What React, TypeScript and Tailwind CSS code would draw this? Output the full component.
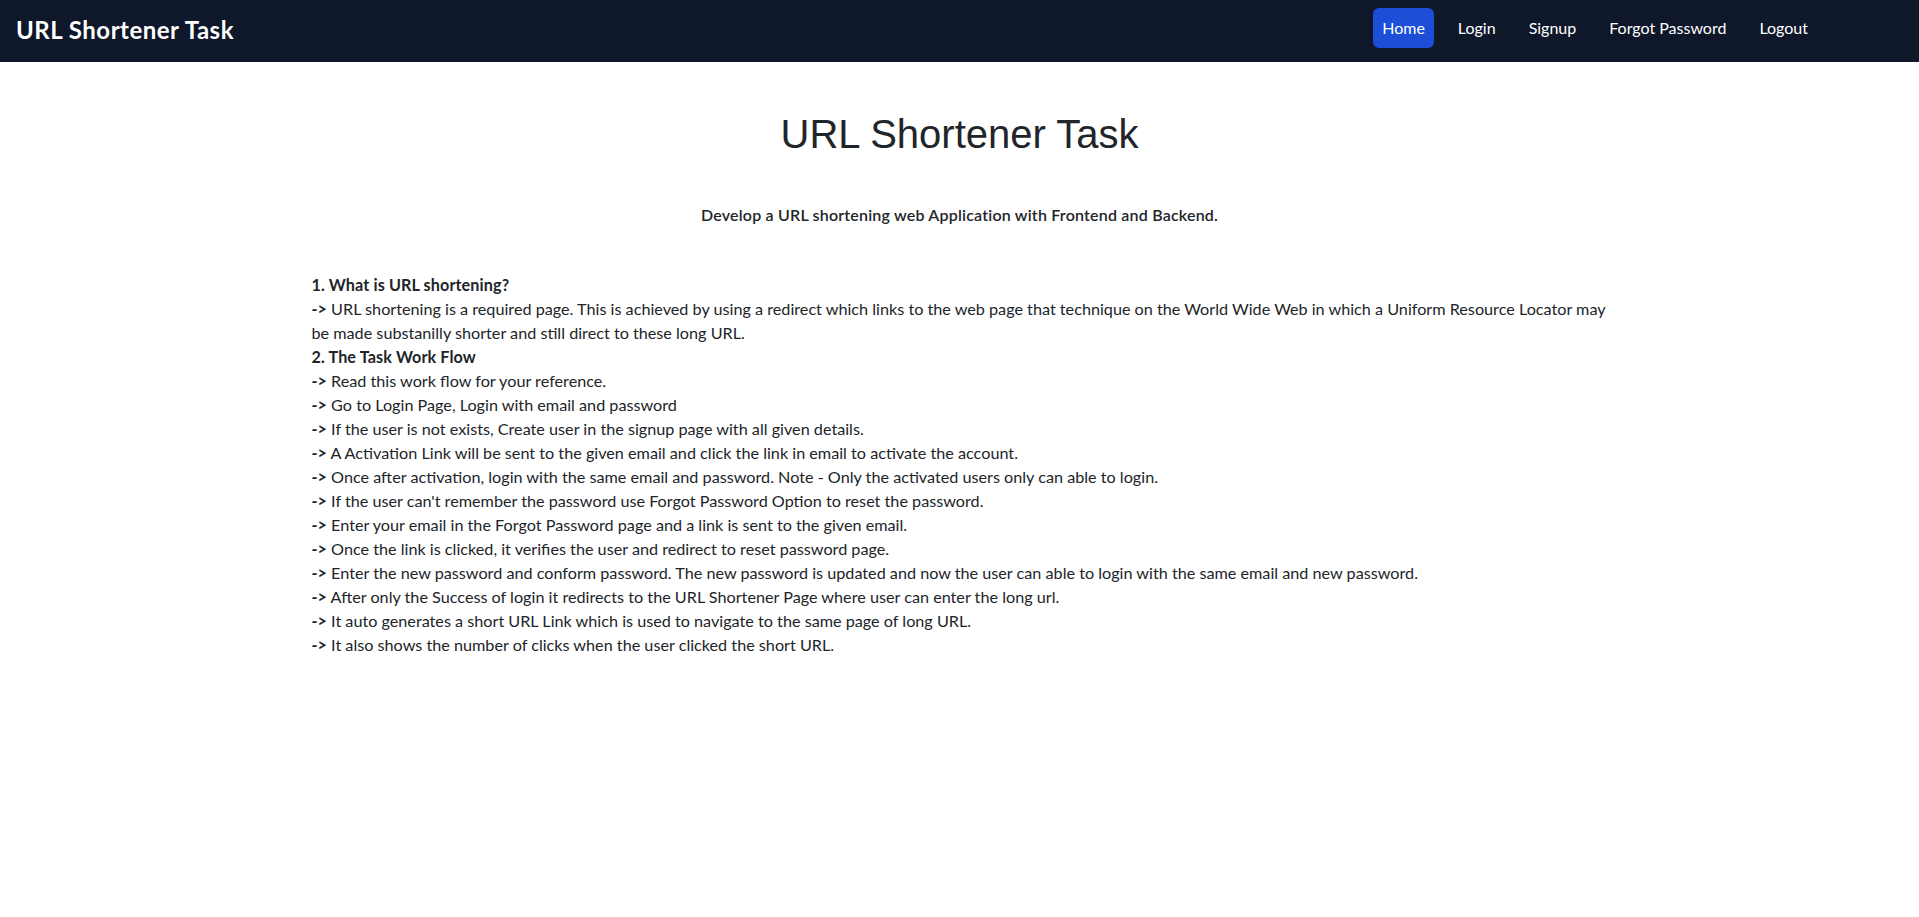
const navLinks = ["Home", "Login", "Signup", "Forgot Password", "Logout"];

const steps = [
  "Read this work flow for your reference.",
  "Go to Login Page, Login with email and password",
  "If the user is not exists, Create user in the signup page with all given details.",
  "A Activation Link will be sent to the given email and click the link in email to activate the account.",
  "Once after activation, login with the same email and password. Note - Only the activated users only can able to login.",
  "If the user can't remember the password use Forgot Password Option to reset the password.",
  "Enter your email in the Forgot Password page and a link is sent to the given email.",
  "Once the link is clicked, it verifies the user and redirect to reset password page.",
  "Enter the new password and conform password. The new password is updated and now the user can able to login with the same email and new password.",
  "After only the Success of login it redirects to the URL Shortener Page where user can enter the long url.",
  "It auto generates a short URL Link which is used to navigate to the same page of long URL.",
  "It also shows the number of clicks when the user clicked the short URL.",
];

function Arrow() {
  return <b className="font-bold">-&gt;</b>;
}

export default function App() {
  return (
    <div className="min-h-screen bg-white text-[#212529] font-['Lato',sans-serif]">
      <nav className="flex h-[62px] items-center justify-between bg-[#0f172a] pl-4 pr-[102px]">
        <a href="#" className="mb-[3px] text-[24px] font-bold leading-none tracking-[0.5px] text-white">
          URL Shortener Task
        </a>
        <ul className="mb-[6px] flex items-center gap-[15px]">
          {navLinks.map((link, i) => (
            <li key={link}>
              <a
                href="#"
                className={
                  i === 0
                    ? "block rounded-md bg-[#1d4ed8] px-[9px] py-2 text-[16px] leading-6 text-white"
                    : "block rounded-md px-[9px] py-2 text-[16px] leading-6 text-white"
                }
              >
                {link}
              </a>
            </li>
          ))}
        </ul>
      </nav>

      <div className="mx-auto w-[1320px] px-3">
        <h1 className="mt-[48px] text-center font-['Liberation_Sans',Arial,sans-serif] text-[40px] leading-[48px] font-normal">
          URL Shortener Task
        </h1>
        <p className="mt-[45px] text-center text-[16px] font-semibold leading-6 tracking-[0.2px]">
          Develop a URL shortening web Application with Frontend and Backend.
        </p>

        <div className="mt-[46px] text-[16.2px] leading-6">
          <div className="font-bold tracking-[0.1px]">1. What is URL shortening?</div>
          <p>
            <Arrow /> URL shortening is a required page. This is achieved by using a redirect which links to the
            web page that technique on the World Wide Web in which a Uniform Resource Locator may be made substanilly
            shorter and still direct to these long URL.
          </p>
          <div className="font-bold tracking-[0.1px]">2. The Task Work Flow</div>
          {steps.map((s) => (
            <div key={s}>
              <Arrow /> {s}
            </div>
          ))}
        </div>
      </div>
    </div>
  );
}
